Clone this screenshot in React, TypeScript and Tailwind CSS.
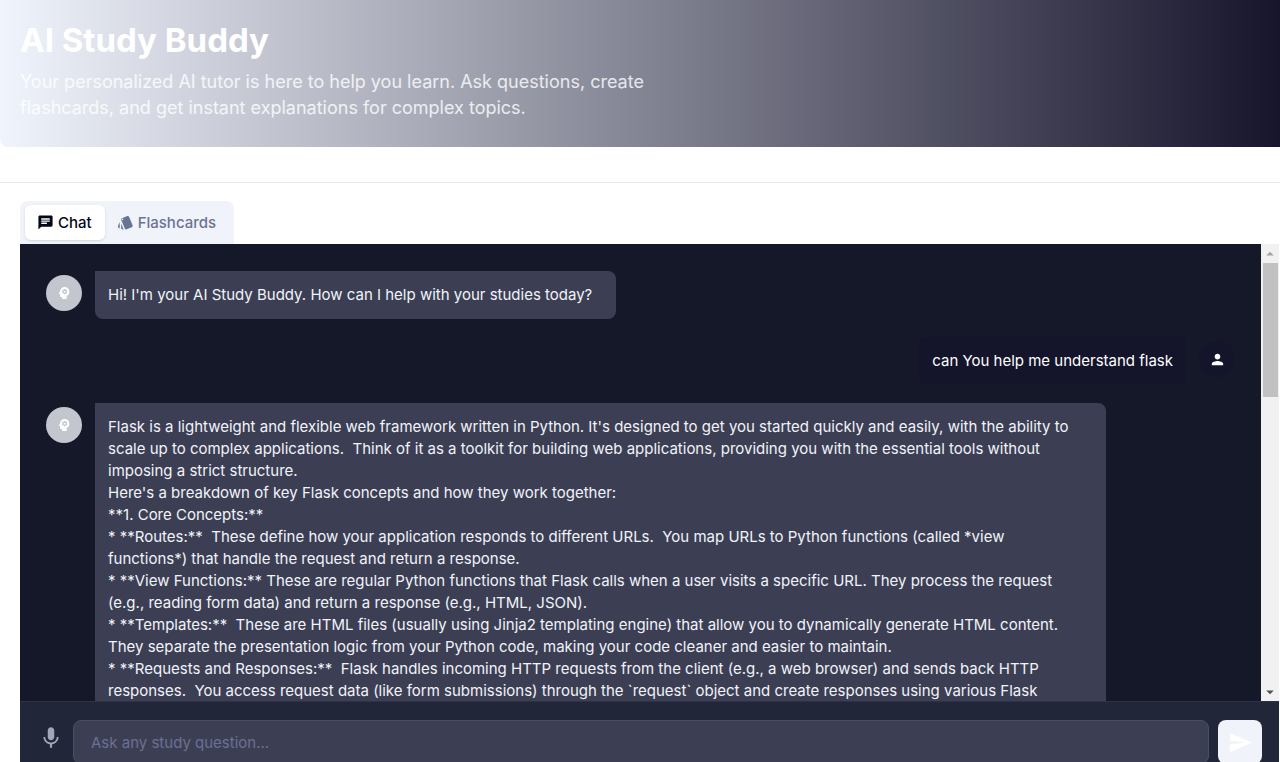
import { useState, type ReactNode } from "react"
import {
  MdArrowDropDown,
  MdArrowDropUp,
  MdChat,
  MdPerson,
  MdPsychology,
  MdSend,
  MdStyle,
} from "react-icons/md"

type Message = { from: "bot" | "user"; text: string }

const MESSAGES: Message[] = [
  { from: "bot", text: "Hi! I'm your AI Study Buddy. How can I help with your studies today?" },
  { from: "user", text: "can You help me understand flask" },
  {
    from: "bot",
    text: [
      "Flask is a lightweight and flexible web framework written in Python. It's designed to get you started quickly and easily, with the ability to scale up to complex applications.  Think of it as a toolkit for building web applications, providing you with the essential tools without imposing a strict structure.",
      "Here's a breakdown of key Flask concepts and how they work together:",
      "**1. Core Concepts:**",
      "* **Routes:**  These define how your application responds to different URLs.  You map URLs to Python functions (called *view functions*) that handle the request and return a response.",
      "* **View Functions:** These are regular Python functions that Flask calls when a user visits a specific URL. They process the request (e.g., reading form data) and return a response (e.g., HTML, JSON).",
      "* **Templates:**  These are HTML files (usually using Jinja2 templating engine) that allow you to dynamically generate HTML content. They separate the presentation logic from your Python code, making your code cleaner and easier to maintain.",
      "* **Requests and Responses:**  Flask handles incoming HTTP requests from the client (e.g., a web browser) and sends back HTTP responses.  You access request data (like form submissions) through the `request` object and create responses using various Flask",
    ].join("\n"),
  },
]

function MicIcon() {
  return (
    <svg viewBox="0 0 24 24" fill="currentColor" className="size-[26px]" aria-hidden="true">
      <path d="M12 14c1.66 0 2.99-1.34 2.99-3L15 5c0-1.66-1.34-3-3-3S9 3.34 9 5v6c0 1.66 1.34 3 3 3zm5.3-3c0 3-2.54 5.1-5.3 5.1S6.7 14 6.7 11H5c0 3.41 2.72 6.23 6 6.72V21h2v-3.28c3.28-.48 6-3.3 6-6.72h-1.7z" />
    </svg>
  )
}

function Tab({
  active,
  onClick,
  children,
}: {
  active: boolean
  onClick: () => void
  children: ReactNode
}) {
  return (
    <button
      role="tab"
      aria-selected={active}
      onClick={onClick}
      className={`flex h-[35px] items-center gap-1 rounded-md pr-[13px] pl-3 text-[15px] leading-6 font-medium ${
        active ? "bg-white text-[#020817] shadow-sm" : "text-[#6b7394]"
      }`}
    >
      {children}
    </button>
  )
}

function Bubble({ from, text }: Message) {
  if (from === "user") {
    return (
      <div className="flex flex-row-reverse items-start gap-[13px]">
        <span className="mt-1 flex size-9 shrink-0 items-center justify-center rounded-full bg-[#14142a] text-white">
          <MdPerson className="size-[17px]" />
        </span>
        <p className="rounded-lg rounded-tr-none bg-[#14142a] p-[13px] text-white">{text}</p>
      </div>
    )
  }
  return (
    <div className="flex items-start gap-[13px]">
      <span className="mt-1 flex size-9 shrink-0 items-center justify-center rounded-full bg-[#c3c5cf] text-white">
        <MdPsychology className="size-4" />
      </span>
      <p className="max-w-[85%] rounded-lg rounded-tl-none bg-[#3c3f54] py-[13px] pr-6 pl-[13px] whitespace-pre-wrap text-[#f1f3f9]">
        {text}
      </p>
    </div>
  )
}

export default function App() {
  const [tab, setTab] = useState<"chat" | "cards">("chat")
  const [question, setQuestion] = useState("")

  return (
    <div className="h-screen overflow-hidden bg-white font-['Inter',sans-serif]">
      <header className="rounded-bl-lg bg-linear-to-r/srgb from-[#f0f4fc] to-[#17152c] px-5 pt-5 pb-[26px]">
        <h1 className="text-[33px] leading-10 font-bold text-white">AI Study Buddy</h1>
        <p className="mt-[9px] max-w-[640px] text-lg leading-[26px] text-white/80">
          Your personalized AI tutor is here to help you learn. Ask questions, create flashcards,
          and get instant explanations for complex topics.
        </p>
      </header>

      <main className="mt-[35px] border-t border-[#e5e7eb] pt-[18px] pl-5">
        <div role="tablist" className="inline-flex rounded-t-lg bg-[#f0f4fa] px-[5px] py-1 align-top">
          <Tab active={tab === "chat"} onClick={() => setTab("chat")}>
            <MdChat className="size-[17px]" />
            Chat
          </Tab>
          <Tab active={tab === "cards"} onClick={() => setTab("cards")}>
            <MdStyle className="size-[17px]" />
            Flashcards
          </Tab>
        </div>

        <section className="mr-px bg-[#151829]">
          <div className="flex h-[60vh]">
            <div className="flex min-w-0 flex-1 flex-col gap-[18px] overflow-hidden px-[26px] pt-[27px] pb-[26px] text-[15px] leading-[22px]">
              {MESSAGES.map((m) => (
                <Bubble key={m.text} {...m} />
              ))}
            </div>
            {/* scroll track */}
            <div className="flex w-[18px] shrink-0 flex-col items-center bg-[#f1f1f1] pt-px">
              <MdArrowDropUp className="size-[18px] text-[#a3a3a3]" />
              <div className="h-[134px] w-[15px] bg-[#c1c1c1]" />
              <MdArrowDropDown className="mt-auto size-[18px] text-[#505050]" />
            </div>
          </div>

          <form
            onSubmit={(e) => e.preventDefault()}
            className="flex items-center gap-[9px] border-t border-[#2f3246] bg-[#222639] py-[18px] pr-[17px] pl-[18px]"
          >
            <button type="button" aria-label="Voice input" className="mb-2 flex w-[26px] justify-center text-[#a3a6b7]">
              <MicIcon />
            </button>
            <input
              aria-label="Ask any study question"
              placeholder="Ask any study question..."
              value={question}
              onChange={(e) => setQuestion(e.target.value)}
              className="h-11 min-w-0 flex-1 rounded-lg border border-[#4a4e64] bg-[#3c3f54] px-[17px] text-[15px] text-white outline-none placeholder:text-[#6b7092]"
            />
            <button
              aria-label="Send"
              className="flex size-11 shrink-0 items-center justify-center rounded-lg bg-[#f0f4fa] text-white"
            >
              <MdSend className="size-[25px]" />
            </button>
          </form>
        </section>
      </main>
    </div>
  )
}
